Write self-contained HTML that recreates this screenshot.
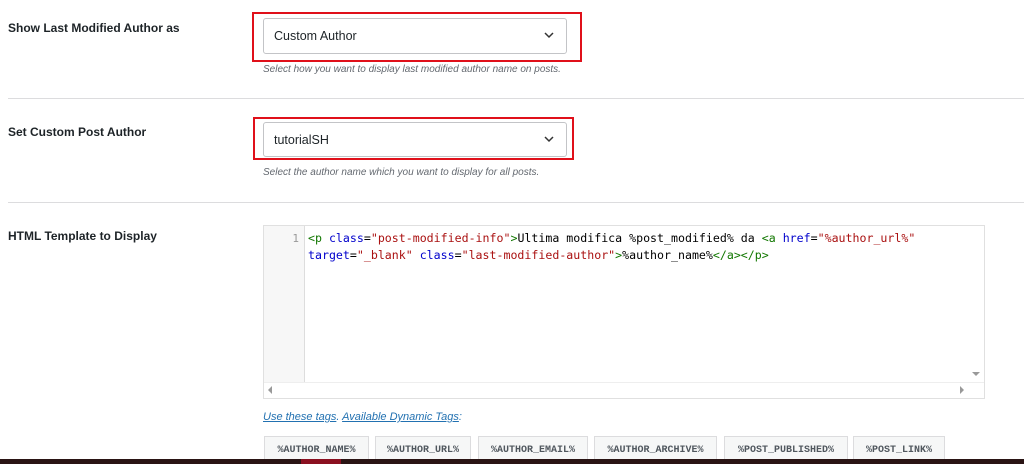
<!DOCTYPE html>
<html><head><style>
body{margin:0;width:1024px;height:464px;background:#fff;font-family:"Liberation Sans",sans-serif;position:relative;overflow:hidden;color:#1d2327}
.lbl{position:absolute;left:8px;font-size:12px;font-weight:bold;color:#1d2327}
.hr{position:absolute;left:8px;right:0;height:1px;background:#dcdcde}
.red{position:absolute;border:2px solid #e0101a}
.sel{position:absolute;border:1px solid #c3c4c7;border-radius:3px;background:#fff;font-size:12.5px;line-height:34px;padding-left:10px;box-sizing:border-box}
.sel svg{position:absolute;right:12px;top:13px}
.desc{position:absolute;left:263px;font-size:10px;font-style:italic;color:#646970}
.ed{position:absolute;left:263px;top:225px;width:722px;height:174px;border:1px solid #e0e0e0;box-sizing:border-box;background:#fff}
.gut{position:absolute;left:0;top:0;width:40px;bottom:15px;background:#f7f7f7;border-right:1px solid #ddd}
.code{position:absolute;left:44px;top:4px;font-family:"DejaVu Sans Mono","Liberation Mono",monospace;font-size:11.6px;line-height:17px;color:#000;white-space:pre}
.t{color:#170}.a{color:#00c}.s{color:#a11}
.tag{position:absolute;top:436px;height:26px;border:1px solid #dcdcde;background:#f6f7f7;font-family:"Liberation Mono",monospace;font-size:10px;font-weight:bold;color:#50575e;line-height:28px;text-align:center;box-sizing:border-box}
</style></head><body>
<div class="lbl" style="top:21px">Show Last Modified Author as</div>
<div class="red" style="left:252px;top:12px;width:326px;height:46px"></div>
<div class="sel" style="left:263px;top:18px;width:304px;height:36px">Custom Author<svg width="10" height="7"><path d="M1 1l4 4 4-4" stroke="#333" stroke-width="1.5" fill="none"/></svg></div>
<div class="desc" style="top:64px">Select how you want to display last modified author name on posts.</div>
<div class="hr" style="top:98px"></div>
<div class="lbl" style="top:125px">Set Custom Post Author</div>
<div class="red" style="left:253px;top:117px;width:317px;height:39px"></div>
<div class="sel" style="left:263px;top:122px;width:304px;height:35px">tutorialSH<svg width="10" height="7"><path d="M1 1l4 4 4-4" stroke="#333" stroke-width="1.5" fill="none"/></svg></div>
<div class="desc" style="top:167px">Select the author name which you want to display for all posts.</div>
<div class="hr" style="top:202px"></div>
<div class="lbl" style="top:229px">HTML Template to Display</div>
<div class="ed"><div class="gut"><div style="position:absolute;right:5px;top:4px;font-family:'DejaVu Sans Mono',monospace;font-size:11px;color:#999;line-height:17px">1</div></div>
<div class="code"><span class="t">&lt;p</span> <span class="a">class</span>=<span class="s">"post-modified-info"</span><span class="t">&gt;</span>Ultima modifica %post_modified% da <span class="t">&lt;a</span> <span class="a">href</span>=<span class="s">"%author_url%"</span>
<span class="a">target</span>=<span class="s">"_blank"</span> <span class="a">class</span>=<span class="s">"last-modified-author"</span><span class="t">&gt;</span>%author_name%<span class="t">&lt;/a&gt;&lt;/p&gt;</span></div>
<div style="position:absolute;left:0;right:0;bottom:0;height:15px;background:#fff;border-top:1px solid #eee"></div>
<div style="position:absolute;left:4px;bottom:4px;width:0;height:0;border:4px solid transparent;border-right-color:#999;border-left:0"></div>
<div style="position:absolute;right:20px;bottom:4px;width:0;height:0;border:4px solid transparent;border-left-color:#999;border-right:0"></div>
<div style="position:absolute;right:4px;bottom:22px;width:0;height:0;border:4px solid transparent;border-top-color:#999;border-bottom:0"></div>
</div>
<div style="position:absolute;left:263px;top:411px;font-size:11px;font-style:italic;color:#2271b1"><u>Use these tags</u>. <u>Available Dynamic Tags</u>:</div>
<div class="tag" style="left:264px;width:105px">%AUTHOR_NAME%</div>
<div class="tag" style="left:375px;width:96px">%AUTHOR_URL%</div>
<div class="tag" style="left:478px;width:110px">%AUTHOR_EMAIL%</div>
<div class="tag" style="left:594px;width:123px">%AUTHOR_ARCHIVE%</div>
<div class="tag" style="left:724px;width:124px">%POST_PUBLISHED%</div>
<div class="tag" style="left:853px;width:92px">%POST_LINK%</div>
<div style="position:absolute;left:0;right:0;top:459px;height:5px;background:#2a1414"></div>
<div style="position:absolute;left:301px;top:459px;width:40px;height:5px;background:#8a1020"></div>
</body></html>
